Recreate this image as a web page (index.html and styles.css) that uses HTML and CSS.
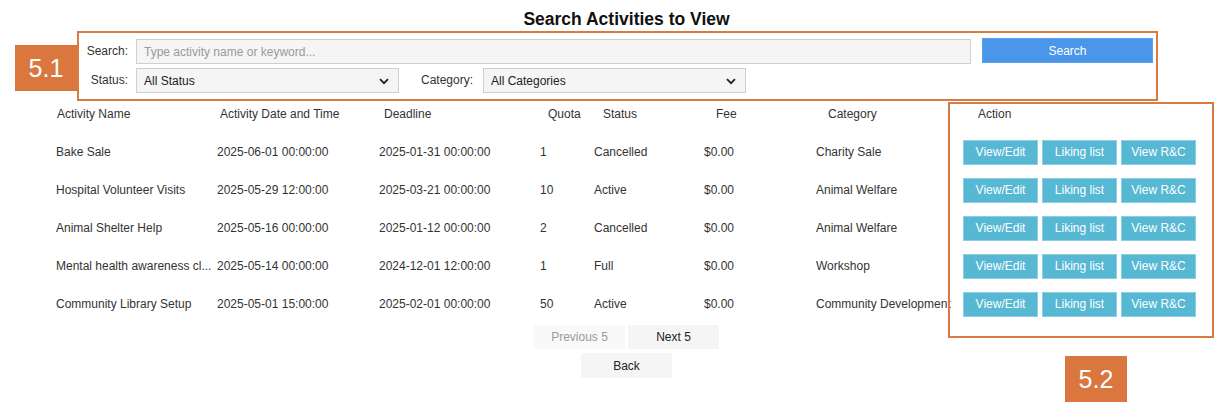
FILE: index.html
```html
<!DOCTYPE html>
<html lang="en">
<head>
<meta charset="utf-8">
<title>Search Activities to View</title>
<link rel="stylesheet" href="styles.css">
</head>
<body>
<div class="page">
  <h1 class="title">Search Activities to View</h1>
  <form class="search-form">
    <div class="form-row row-search">
      <label class="lbl" for="q">Search:</label>
      <input id="q" class="search-input" type="text" placeholder="Type activity name or keyword...">
      <button type="button" class="btn-search">Search</button>
    </div>
    <div class="form-row row-filter">
      <label class="lbl" for="st">Status:</label>
      <div class="select-wrap">
        <select id="st" class="sel"><option>All Status</option></select>
        <svg class="chev" width="10" height="7" viewBox="0 0 10 7"><path d="M1 1.2 L5 5.2 L9 1.2" fill="none" stroke="#222" stroke-width="1.8"/></svg>
      </div>
      <label class="lbl lbl-cat" for="cat">Category:</label>
      <div class="select-wrap">
        <select id="cat" class="sel"><option>All Categories</option></select>
        <svg class="chev" width="10" height="7" viewBox="0 0 10 7"><path d="M1 1.2 L5 5.2 L9 1.2" fill="none" stroke="#222" stroke-width="1.8"/></svg>
      </div>
    </div>
  </form>

  <div class="table">
    <div class="thead">
      <div>Activity Name</div>
      <div>Activity Date and Time</div>
      <div>Deadline</div>
      <div>Quota</div>
      <div>Status</div>
      <div>Fee</div>
      <div>Category</div>
      <div>Action</div>
    </div>
    <div class="tr">
      <div class="name">Bake Sale</div>
      <div>2025-06-01 00:00:00</div>
      <div>2025-01-31 00:00:00</div>
      <div>1</div>
      <div>Cancelled</div>
      <div>$0.00</div>
      <div class="cat">Charity Sale</div>
      <div class="actions"><button class="act">View/Edit</button><button class="act">Liking list</button><button class="act">View R&amp;C</button></div>
    </div>
    <div class="tr">
      <div class="name">Hospital Volunteer Visits</div>
      <div>2025-05-29 12:00:00</div>
      <div>2025-03-21 00:00:00</div>
      <div>10</div>
      <div>Active</div>
      <div>$0.00</div>
      <div class="cat">Animal Welfare</div>
      <div class="actions"><button class="act">View/Edit</button><button class="act">Liking list</button><button class="act">View R&amp;C</button></div>
    </div>
    <div class="tr">
      <div class="name">Animal Shelter Help</div>
      <div>2025-05-16 00:00:00</div>
      <div>2025-01-12 00:00:00</div>
      <div>2</div>
      <div>Cancelled</div>
      <div>$0.00</div>
      <div class="cat">Animal Welfare</div>
      <div class="actions"><button class="act">View/Edit</button><button class="act">Liking list</button><button class="act">View R&amp;C</button></div>
    </div>
    <div class="tr">
      <div class="name">Mental health awareness cl...</div>
      <div>2025-05-14 00:00:00</div>
      <div>2024-12-01 12:00:00</div>
      <div>1</div>
      <div>Full</div>
      <div>$0.00</div>
      <div class="cat">Workshop</div>
      <div class="actions"><button class="act">View/Edit</button><button class="act">Liking list</button><button class="act">View R&amp;C</button></div>
    </div>
    <div class="tr">
      <div class="name">Community Library Setup</div>
      <div>2025-05-01 15:00:00</div>
      <div>2025-02-01 00:00:00</div>
      <div>50</div>
      <div>Active</div>
      <div>$0.00</div>
      <div class="cat">Community Development</div>
      <div class="actions"><button class="act">View/Edit</button><button class="act">Liking list</button><button class="act">View R&amp;C</button></div>
    </div>
  </div>

  <div class="pager">
    <button class="pg pg-disabled" disabled>Previous 5</button>
    <button class="pg">Next 5</button>
  </div>
  <div class="back-row">
    <button class="pg">Back</button>
  </div>
</div>

<div class="anno anno-51"></div>
<div class="badge badge-51">5.1</div>
<div class="anno anno-52"></div>
<div class="badge badge-52">5.2</div>
</body>
</html>
```

FILE: styles.css
```css
* { box-sizing: border-box; }

html, body {
  margin: 0;
  padding: 0;
  background: #ffffff;
}

body {
  font-family: "Liberation Sans", Arial, sans-serif;
  font-size: 12px;
  color: #333333;
  position: relative;
  width: 1224px;
  height: 412px;
  overflow: hidden;
}

.page {
  margin-left: 56px;
  width: 1141px;
  padding-top: 9px;
}

.title {
  margin: 0;
  font-size: 17.5px;
  line-height: 20px;
  font-weight: bold;
  color: #111111;
  text-align: center;
}

.search-form {
  margin: 9px 0 0 24px;
}

.form-row {
  display: flex;
  align-items: flex-start;
}

.row-filter {
  margin-top: 4px;
  align-items: center;
}

.lbl {
  width: 48px;
  margin-right: 8px;
  text-align: right;
  color: #333333;
  line-height: 25px;
  white-space: nowrap;
}

.row-search .lbl {
  margin-top: 1px;
}

.lbl-cat {
  margin-left: 26px;
  margin-right: 10px;
  display: flex;
  justify-content: flex-end;
}

.search-input {
  margin-top: 1px;
  width: 835px;
  height: 25px;
  padding: 0 7px;
  border: 1px solid #cfcfcf;
  background: #f5f5f5;
  font-family: inherit;
  font-size: 12px;
  color: #333333;
  outline: none;
}

.search-input::placeholder {
  color: #9a9a9a;
}

.btn-search {
  margin-left: 11px;
  width: 171px;
  height: 25px;
  border: 1px solid #5aa0ee;
  background: #4a96e8;
  color: #ffffff;
  font-family: inherit;
  font-size: 12px;
  padding: 0;
}

.select-wrap {
  position: relative;
  width: 263px;
  height: 25px;
}

.sel {
  -webkit-appearance: none;
  appearance: none;
  width: 100%;
  height: 25px;
  padding: 0 7px;
  border: 1px solid #cfcfcf;
  border-radius: 0;
  background: #f5f5f5;
  font-family: inherit;
  font-size: 12px;
  color: #222222;
  outline: none;
}

.chev {
  position: absolute;
  right: 10px;
  top: 10px;
  pointer-events: none;
}

.table {
  margin-top: 2px;
}

.thead,
.tr {
  display: grid;
  height: 38px;
  align-items: center;
}

.thead {
  grid-template-columns: 163px 164px 164px 55px 113px 112px 150px 1fr;
  padding-left: 1px;
  color: #333333;
}

.tr {
  grid-template-columns: 161px 162px 161px 54px 110px 112px 147px 1fr;
  color: #333333;
}

.tr > div {
  white-space: nowrap;
}

.actions {
  display: flex;
  gap: 4px;
}

.act {
  width: 75px;
  height: 25px;
  padding: 0;
  border: 1px solid #8ccfe2;
  background: #56b8d3;
  color: #ffffff;
  font-family: inherit;
  font-size: 12px;
}

.pager {
  margin-top: 2px;
  display: flex;
  justify-content: center;
  gap: 3px;
}

.back-row {
  margin-top: 4px;
  display: flex;
  justify-content: center;
}

.pg {
  width: 91px;
  height: 24px;
  padding: 0;
  border: none;
  background: #f5f5f5;
  color: #222222;
  font-family: inherit;
  font-size: 12px;
}

.back-row .pg {
  height: 25px;
}

.pg-disabled {
  background: #f9f9f9;
  color: #9a9a9a;
}

.anno {
  position: absolute;
  border: 2px solid #da7a43;
  pointer-events: none;
}

.anno-51 {
  left: 77px;
  top: 31px;
  width: 1081px;
  height: 70px;
}

.anno-52 {
  left: 948px;
  top: 102px;
  width: 266px;
  height: 236px;
}

.badge {
  position: absolute;
  width: 62px;
  height: 46px;
  background: #d9773f;
  color: #ffffff;
  font-size: 25px;
  line-height: 46px;
  text-align: center;
}

.badge-51 {
  left: 15px;
  top: 45px;
}

.badge-52 {
  left: 1065px;
  top: 356px;
}
```
